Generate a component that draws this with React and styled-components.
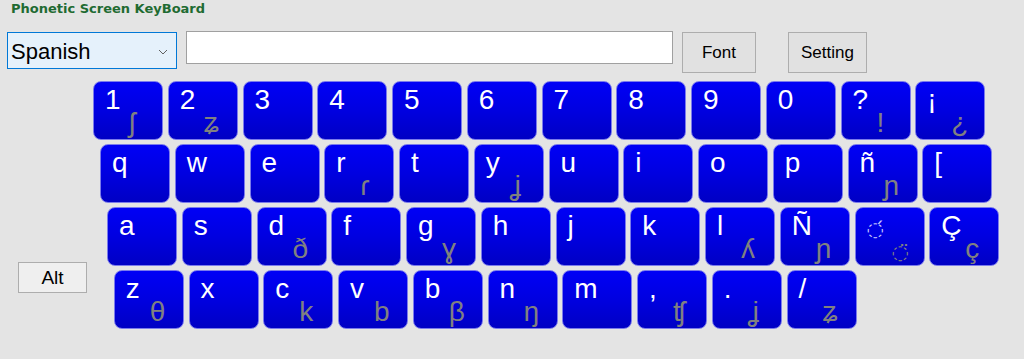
import React from "react";
import styled, { createGlobalStyle } from "styled-components";

const Global = createGlobalStyle`
  html, body { margin: 0; padding: 0; background: #e4e4e4; }
  body { font-family: "Liberation Sans", Arial, sans-serif; }
  * { box-sizing: border-box; }
`;

const Page = styled.div`
  width: 1024px;
  height: 359px;
  background: #e4e4e4;
  overflow: hidden;
`;

const Title = styled.div`
  font-family: "DejaVu Sans", Verdana, sans-serif;
  font-weight: bold;
  font-size: 13px;
  line-height: 16px;
  color: #1f6b32;
  padding: 1px 0 0 11px;
  height: 31px;
`;

const Toolbar = styled.div`
  display: flex;
  align-items: flex-start;
  padding-left: 7px;
  height: 50px;
`;

const Combo = styled.div`
  width: 170px;
  height: 37px;
  margin-top: 1px;
  border: 1px solid #0078d7;
  background: #e5f1fb;
  display: flex;
  align-items: center;
  justify-content: space-between;
  padding: 2px 8px 0 3px;
  font-size: 22px;
  color: #000;
`;

const TextBox = styled.div`
  width: 487px;
  height: 33px;
  margin-left: 9px;
  border: 1px solid #a0a0a0;
  background: #fff;
`;

const Button = styled.div`
  width: ${(p) => p.$w}px;
  height: 41px;
  margin-left: ${(p) => p.$ml}px;
  margin-top: 1px;
  border: 1px solid #adadad;
  background: #e1e1e1;
  display: flex;
  align-items: center;
  justify-content: center;
  font-size: 17px;
  color: #000;
`;

const Keyboard = styled.div`
  display: flex;
  flex-direction: column;
  gap: 4px;
`;

const Row = styled.div`
  display: flex;
  align-items: flex-start;
  gap: 4.75px;
  padding-left: ${(p) => p.$indent}px;
`;

const AltButton = styled.div`
  width: 69px;
  height: 31px;
  margin-top: -8px;
  margin-right: 22px;
  border: 1px solid #adadad;
  background: #efefef;
  display: flex;
  align-items: center;
  justify-content: center;
  font-size: 19px;
  color: #000;
`;

const Key = styled.div`
  position: relative;
  width: 70px;
  height: 59px;
  border: 1px solid #7b7bec;
  border-radius: 8px;
  background: linear-gradient(to bottom, #0000f6 0%, #0000e0 50%, #0000c4 100%);
  flex: none;
  font-family: "Liberation Sans", Arial, sans-serif;
`;

const Main = styled.span`
  position: absolute;
  left: 11px;
  top: ${(p) => (p.$mark ? 7 : 4)}px;
  font-family: ${(p) => (p.$mark ? '"DejaVu Sans", sans-serif' : "inherit")};
  font-size: ${(p) => (p.$mark ? 20 : 28)}px;
  line-height: 28px;
  color: ${(p) => (p.$mark ? "#c8c8ff" : "#ffffff")};
  white-space: nowrap;
`;

const Sub = styled.span`
  position: absolute;
  left: ${(p) => (p.$mark ? 36 : 35)}px;
  top: ${(p) => (p.$mark ? 30 : 27)}px;
  font-family: ${(p) => (p.$mark ? '"DejaVu Sans", sans-serif' : "inherit")};
  font-size: ${(p) => (p.$mark ? 20 : 28)}px;
  line-height: 28px;
  color: #808080;
  white-space: nowrap;
  letter-spacing: ${(p) => (p.$tight ? "-2px" : "0")};
`;

const Chevron = () => (
  <svg width="10" height="6" viewBox="0 0 10 6">
    <path d="M1 1 L5 5 L9 1" fill="none" stroke="#606060" strokeWidth="1" />
  </svg>
);

const rows = [
  {
    indent: 93,
    keys: [
      ["1", "ʃ"], ["2", "ʑ"], ["3", ""], ["4", ""], ["5", ""], ["6", ""],
      ["7", ""], ["8", ""], ["9", ""], ["0", ""], ["?", "!"], ["¡", "¿"],
    ],
  },
  {
    indent: 100,
    keys: [
      ["q", ""], ["w", ""], ["e", ""], ["r", "ɾ"], ["t", ""], ["y", "ʝ"],
      ["u", ""], ["i", ""], ["o", ""], ["p", ""], ["ñ", "ɲ"], ["[", ""],
    ],
  },
  {
    indent: 107,
    keys: [
      ["a", ""], ["s", ""], ["d", "ð"], ["f", ""], ["g", "ɣ"], ["h", ""],
      ["j", ""], ["k", ""], ["l", "ʎ"], ["Ñ", "ɲ"], ["◌́", "◌̈", true], ["Ç", "ç"],
    ],
  },
  {
    indent: 18,
    alt: true,
    keys: [
      ["z", "θ"], ["x", ""], ["c", "k"], ["v", "b"], ["b", "β"], ["n", "ŋ"],
      ["m", ""], [",", "tʃ"], [".", "ʝ"], ["/", "ʑ"],
    ],
  },
];

export default function App() {
  return (
    <Page>
      <Global />
      <Title>Phonetic Screen KeyBoard</Title>
      <Toolbar>
        <Combo>
          <span>Spanish</span>
          <Chevron />
        </Combo>
        <TextBox />
        <Button $w={74} $ml={9}>Font</Button>
        <Button $w={79} $ml={32}>Setting</Button>
      </Toolbar>
      <Keyboard>
        {rows.map((r, i) => (
          <Row key={i} $indent={r.indent}>
            {r.alt && <AltButton>Alt</AltButton>}
            {r.keys.map(([m, s, mark], j) => (
              <Key key={j}>
                <Main $mark={mark}>{m}</Main>
                {s && (
                  <Sub $mark={mark} $tight={s === "tʃ"}>
                    {s}
                  </Sub>
                )}
              </Key>
            ))}
          </Row>
        ))}
      </Keyboard>
    </Page>
  );
}
